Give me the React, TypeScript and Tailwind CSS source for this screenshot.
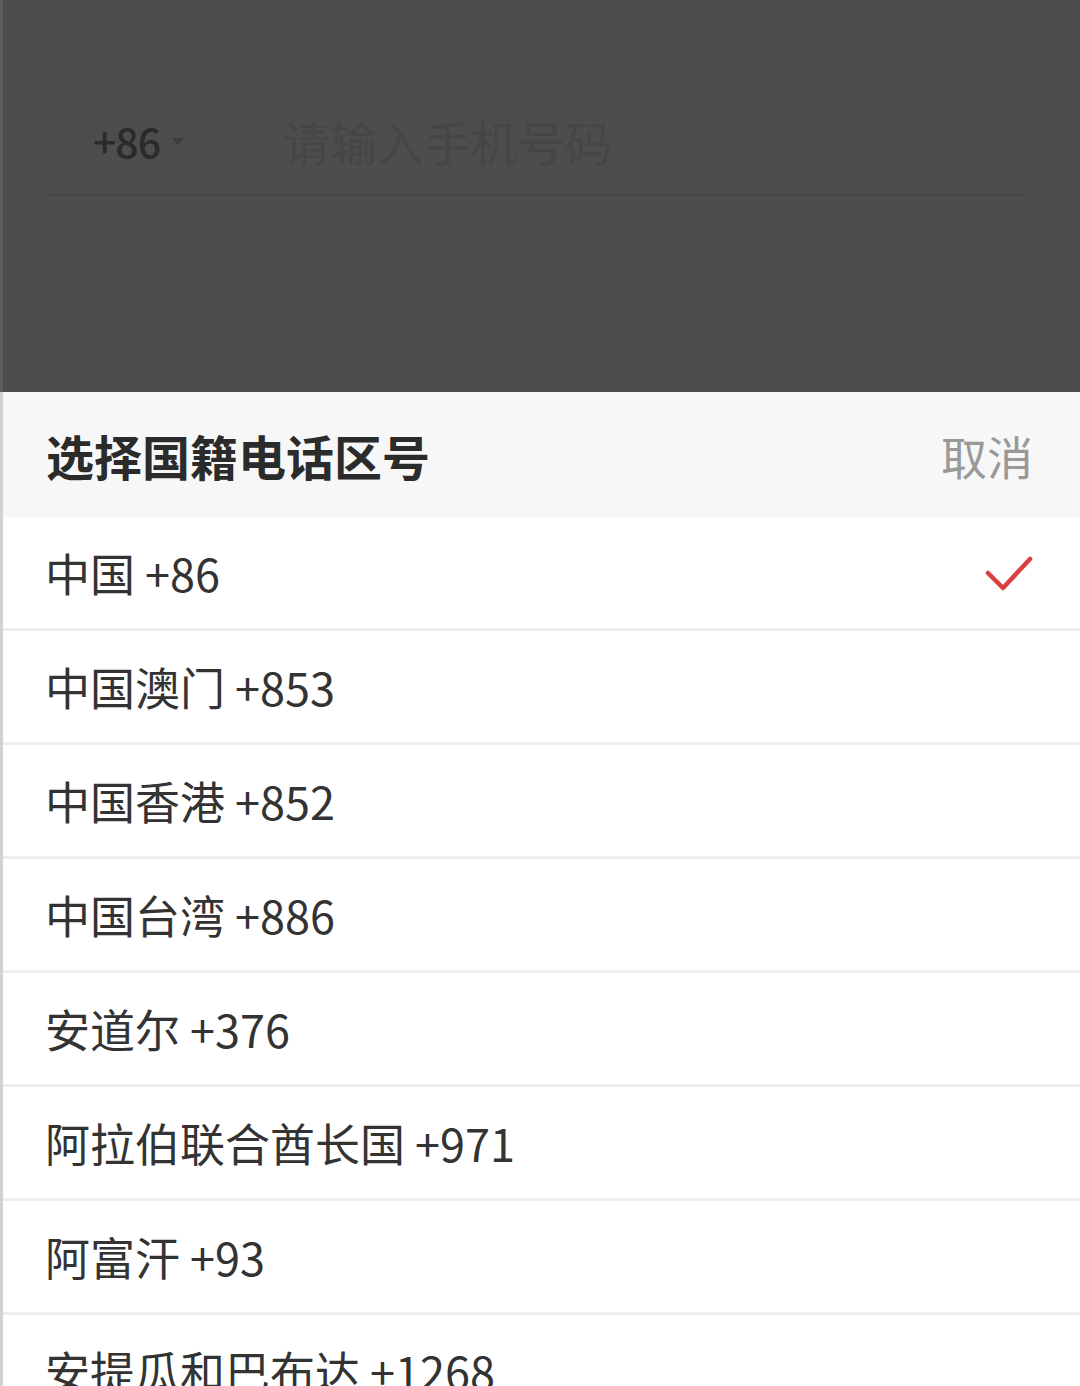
type AreaCode = {
    name: string;
    code: string;
};

const areaCodes: AreaCode[] = [
    { name: "中国", code: "+86" },
    { name: "中国澳门", code: "+853" },
    { name: "中国香港", code: "+852" },
    { name: "中国台湾", code: "+886" },
    { name: "安道尔", code: "+376" },
    { name: "阿拉伯联合酋长国", code: "+971" },
    { name: "阿富汗", code: "+93" },
    { name: "安提瓜和巴布达", code: "+1268" },
];

const font = { fontFamily: '"Noto Sans CJK SC", "Noto Sans", sans-serif' };

function CheckMark() {
    return (
        <svg width="48" height="36" viewBox="0 0 48 36" fill="none">
            <path d="M3 18 L18 33 L45 4" stroke="#d8413f" strokeWidth="4.5" strokeLinecap="round" strokeLinejoin="round" />
        </svg>
    );
}

export default function App() {
    const selected = "+86";

    return (
        <div className="h-[1386px] w-[1080px] overflow-hidden bg-white" style={font}>
            {/* dimmed login form behind the sheet */}
            <div className="h-[392px] border-l-[3px] border-[#5e5e5e] bg-[#4d4d4d] pt-[86px]">
                <div className="ml-[45px] mr-[57px] flex h-[110px] items-center border-b-2 border-[#454545]">
                    <div className="flex w-[235px] items-center pl-[45px]">
                        <span className="text-[41px] font-medium leading-none tracking-[-1px] text-[#2a2a2a]">+86</span>
                        <span className="ml-[12px] mt-[2px] h-0 w-0 border-x-[6px] border-t-[7px] border-x-transparent border-t-[#3c3c3c]" />
                    </div>
                    <span className="text-[47px] leading-none text-[#464646]">请输入手机号码</span>
                </div>
            </div>

            {/* area code picker sheet */}
            <div className="border-l-[3px] border-[#d2d2d2]">
                <div className="flex h-[125px] items-center justify-between bg-[#f7f7f7] pl-[43px] pr-[47px]">
                    <span className="text-[48px] font-bold leading-none text-[#2b2b2b]">选择国籍电话区号</span>
                    <span className="text-[46px] leading-none text-[#999999]">取消</span>
                </div>
                {areaCodes.map((item) => (
                    <div
                        key={item.code}
                        className="flex h-[114px] items-center justify-between border-b-[3px] border-[#eeeeee] bg-white pl-[42px] pr-[47px]"
                    >
                        <span className="text-[45px] leading-none text-[#333333]">
                            {item.name} {item.code}
                        </span>
                        {item.code === selected && <CheckMark />}
                    </div>
                ))}
            </div>
        </div>
    );
}
